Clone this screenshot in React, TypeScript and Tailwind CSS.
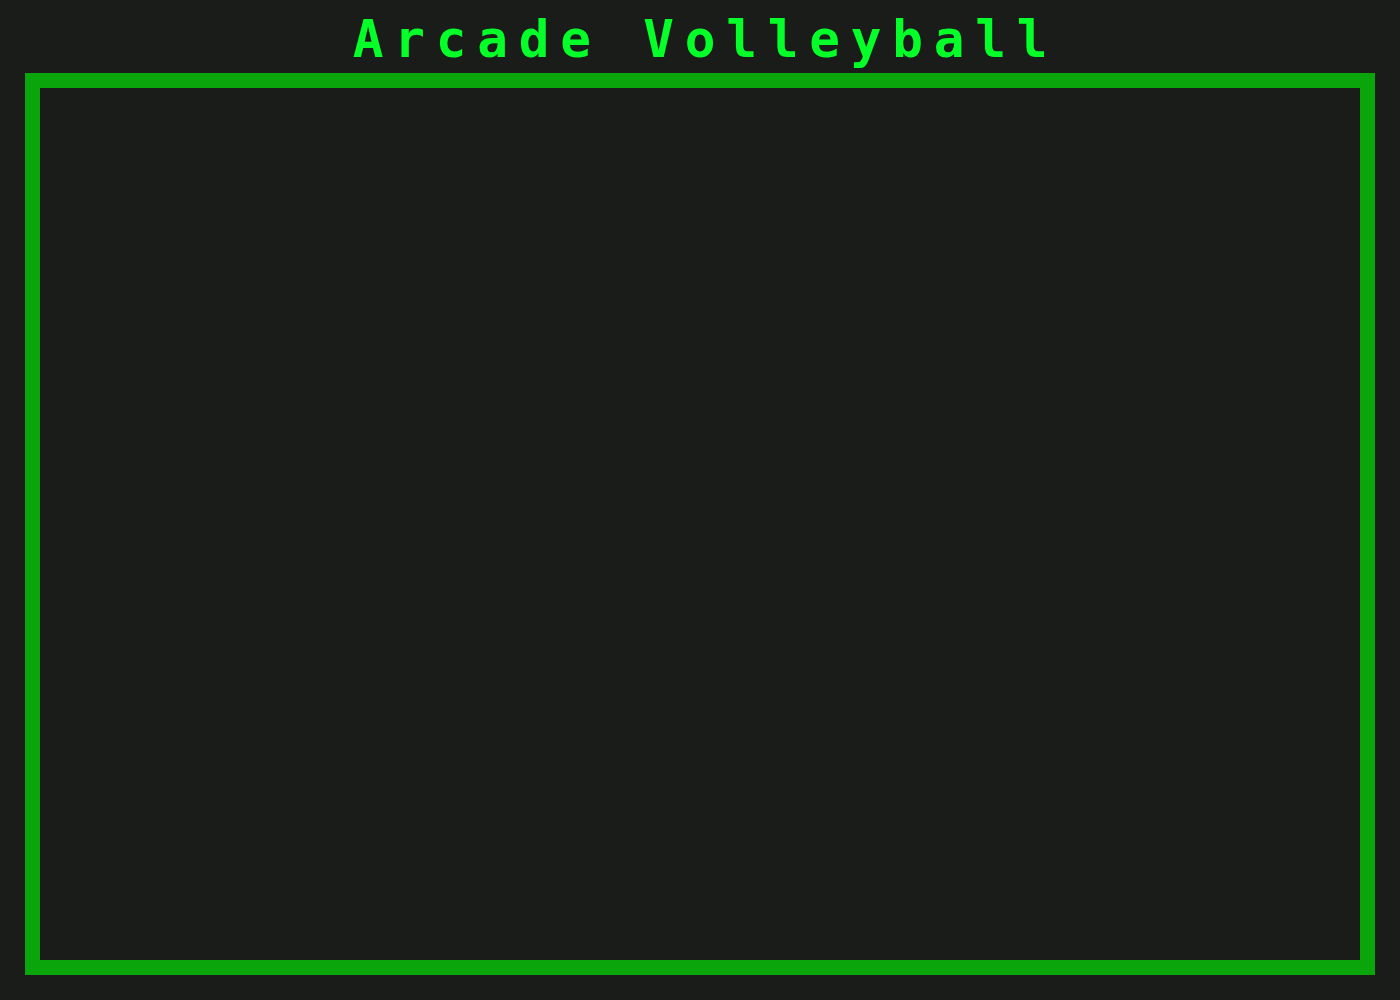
export default function App() {
  return (
    <div className="flex h-screen flex-col bg-[#191c19] px-[25px] pt-[14px] pb-[25px]">
      <h1 className="h-[51px] pl-[11px] text-center font-['DejaVu_Sans_Mono',monospace] text-[51px] font-bold leading-[51px] tracking-[10.8px] text-[#05ff29]">
        Arcade Volleyball
      </h1>
      <div className="mt-[8px] flex-1 border-[15px] border-[#0aa50a] bg-[#191c19]" />
    </div>
  );
}
